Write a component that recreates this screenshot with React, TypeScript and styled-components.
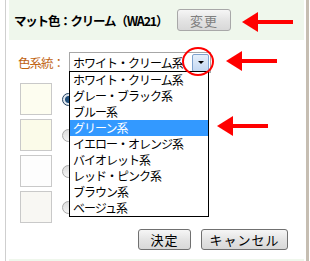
import React from 'react';
import styled, { createGlobalStyle } from 'styled-components';

const GlobalStyle = createGlobalStyle`
  html, body {
    margin: 0;
    padding: 0;
    background: #ffffff;
  }
  body {
    font-family: "Noto Sans CJK JP", "DejaVu Sans", sans-serif;
    font-size: 12px;
    color: #000;
  }
`;

const Page = styled.div`
  position: relative;
  width: 310px;
  height: 261px;
  overflow: hidden;
`;

const Frame = styled.div`
  width: 295px;
  height: 261px;
  margin-left: 5px;
  padding: 0 2px 0 3px;
  border-left: 1px solid #cfcfcf;
  border-right: 3px solid #c6beb2;
  display: flex;
  flex-direction: column;
`;

const Header = styled.div`
  height: 40px;
  flex-shrink: 0;
  background: #eff7ec;
  display: flex;
  align-items: center;
  gap: 9px;
  padding-left: 5px;
`;

const Title = styled.span`
  width: 154px;
  font-size: 12.5px;
  font-weight: 700;
  letter-spacing: -1.2px;
  white-space: nowrap;
`;

const Button = styled.button<{ $width: number; $disabled?: boolean }>`
  width: ${p => p.$width}px;
  height: ${p => (p.$disabled ? 22 : 21)}px;
  padding: 0;
  border: 1px solid ${p => (p.$disabled ? '#a8a8a8' : '#707070')};
  border-radius: 3px;
  background: linear-gradient(#f6f6f6, #e4e4e4 50%, #d8d8d8);
  color: ${p => (p.$disabled ? '#808080' : '#000')};
  font-family: "Noto Sans CJK JP", "DejaVu Sans", sans-serif;
  font-size: 13px;
  line-height: 1;
  letter-spacing: 1px;
  cursor: pointer;
`;

const Body = styled.div`
  flex: 1;
  padding: 12px 16px 0 9px;
  display: flex;
  flex-direction: column;
`;

const FieldRow = styled.div`
  display: flex;
  align-items: center;
`;

const Label = styled.span`
  width: 50px;
  color: #c0620f;
  font-size: 12.5px;
  letter-spacing: -1px;
`;

const SelectBox = styled.div`
  position: relative;
  width: 137px;
  height: 19px;
  border: 1px solid #a7a7a7;
  display: flex;
  align-items: center;
  justify-content: space-between;
  padding-left: 3px;
  box-sizing: content-box;
  margin-left: 1px;
`;

const SelectText = styled.span`
  font-size: 12px;
  letter-spacing: -1px;
  white-space: nowrap;
`;

const DropButton = styled.span`
  width: 15px;
  height: 16px;
  margin-right: 1px;
  border: 1px solid #7ea3cf;
  border-radius: 2px;
  background: linear-gradient(#e6f0fb, #c3d8f2);
  display: flex;
  align-items: center;
  justify-content: center;
`;

const Caret = styled.span`
  width: 0;
  height: 0;
  border-left: 3px solid transparent;
  border-right: 3px solid transparent;
  border-top: 3px solid #000;
`;

const DropList = styled.ul`
  position: absolute;
  top: 18px;
  left: -1px;
  z-index: 2;
  width: 138px;
  margin: 0;
  padding: 0;
  list-style: none;
  background: #fff;
  border: 1px solid #000;
`;

const Option = styled.li<{ $active?: boolean }>`
  height: 16px;
  line-height: 16px;
  overflow: hidden;
  padding-left: 3px;
  font-size: 12px;
  letter-spacing: -1px;
  white-space: nowrap;
  background: ${p => (p.$active ? '#3399ff' : 'transparent')};
  color: ${p => (p.$active ? '#fff' : '#000')};
`;

const Swatches = styled.div`
  display: flex;
  flex-direction: column;
  gap: 4px;
  margin-top: 10px;
  padding-left: 2px;
`;

const SwatchRow = styled.div`
  display: flex;
  align-items: center;
  gap: 10px;
`;

const Swatch = styled.div<{ $color: string }>`
  width: 30px;
  height: 30px;
  border: 1px solid #c9c9c9;
  background: ${p => p.$color};
`;

const Radio = styled.span<{ $checked?: boolean }>`
  width: 11px;
  height: 11px;
  border-radius: 50%;
  border: 1px solid ${p => (p.$checked ? '#1f3f5f' : '#a9a9a9')};
  background: ${p =>
    p.$checked
      ? 'radial-gradient(circle at 50% 50%, #22507c 0 3px, #dfe6ee 4px)'
      : 'linear-gradient(#dcdcdc, #f4f4f4)'};
`;

const Actions = styled.div`
  display: flex;
  justify-content: flex-end;
  gap: 10px;
  margin-top: 6px;
`;

const Footer = styled.div`
  height: 2px;
  margin-top: 9px;
  background: #eff7ec;
`;

const Annotation = styled.svg<{ $x: number; $y: number }>`
  position: absolute;
  left: ${p => p.$x}px;
  top: ${p => p.$y}px;
  z-index: 3;
  overflow: visible;
`;

const Arrow: React.FC<{ x: number; y: number }> = ({ x, y }) => (
  <Annotation $x={x} $y={y} width={51} height={20} viewBox="0 0 51 20">
    <polygon points="0,10 16,0 16,20" fill="#f00" />
    <rect x={15} y={8} width={36} height={4} fill="#f00" />
  </Annotation>
);

const options = [
  'ホワイト・クリーム系',
  'グレー・ブラック系',
  'ブルー系',
  'グリーン系',
  'イエロー・オレンジ系',
  'バイオレット系',
  'レッド・ピンク系',
  'ブラウン系',
  'ベージュ系',
];

const swatches = ['#fdfdf0', '#fbfbe9', '#fdfdfd', '#f8f7f3'];

const App: React.FC = () => (
  <Page>
    <GlobalStyle />
    <Frame>
      <Header>
        <Title>マット色：クリーム（WA21）</Title>
        <Button $width={54} $disabled>変更</Button>
      </Header>
      <Body>
        <FieldRow>
          <Label>色系統：</Label>
          <SelectBox>
            <SelectText>ホワイト・クリーム系</SelectText>
            <DropButton>
              <Caret />
            </DropButton>
            <DropList>
              {options.map((o, i) => (
                <Option key={o} $active={i === 3}>{o}</Option>
              ))}
            </DropList>
          </SelectBox>
        </FieldRow>
        <Swatches>
          {swatches.map((c, i) => (
            <SwatchRow key={c}>
              <Swatch $color={c} />
              <Radio $checked={i === 0} />
            </SwatchRow>
          ))}
        </Swatches>
        <Actions>
          <Button $width={53}>決定</Button>
          <Button $width={87}>キャンセル</Button>
        </Actions>
      </Body>
      <Footer />
    </Frame>
    <Annotation $x={182} $y={47} width={32} height={29} viewBox="0 0 32 29">
      <ellipse cx={16} cy={14.5} rx={15} ry={13.5} fill="none" stroke="#f00" strokeWidth={2} />
    </Annotation>
    <Arrow x={242} y={12} />
    <Arrow x={226} y={51} />
    <Arrow x={217} y={116} />
  </Page>
);

export default App;
